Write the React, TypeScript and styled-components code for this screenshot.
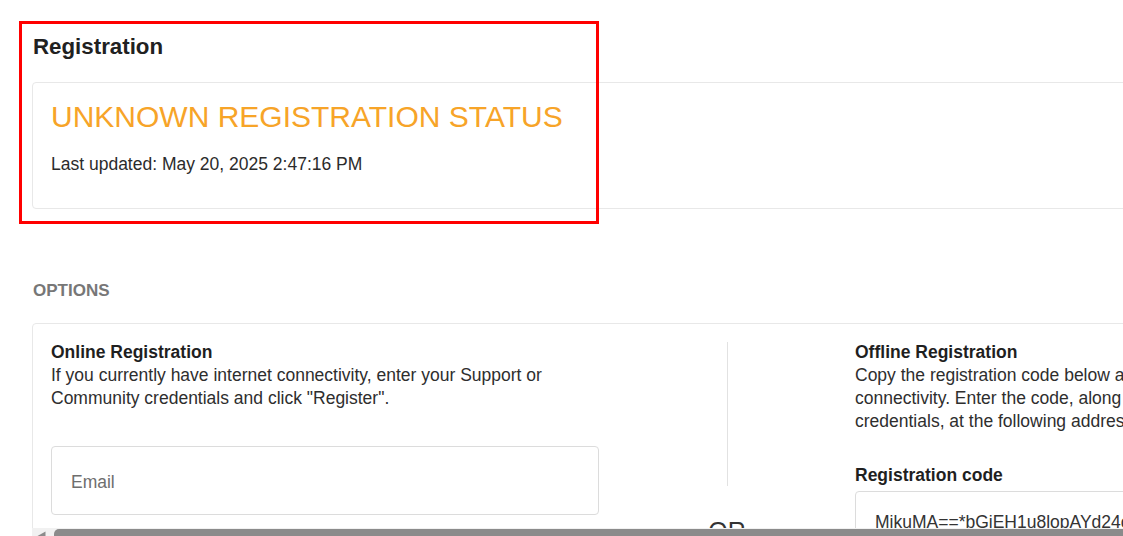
import React from "react";
import styled, { createGlobalStyle } from "styled-components";

const GlobalStyle = createGlobalStyle`
  html, body {
    margin: 0;
    padding: 0;
    background: #ffffff;
    overflow: hidden;
  }
  body {
    font-family: "Liberation Sans", Arial, Helvetica, sans-serif;
    color: #333333;
  }
  * { box-sizing: border-box; }
`;

const Viewport = styled.div`
  position: relative;
  width: 100%;
  height: 536px;
  overflow: hidden;
`;

const Page = styled.div`
  width: 1420px;
  padding: 34px 0 0 32px;
  display: flex;
  flex-direction: column;
`;

const Title = styled.h2`
  margin: 0 0 0 1px;
  font-size: 22.3px;
  line-height: 26px;
  font-weight: 700;
  color: #212121;
`;

const Card = styled.div<{ $top: number }>`
  margin-top: ${(p) => p.$top}px;
  border: 1px solid #e8e8e8;
  border-radius: 4px;
  background: #fff;
`;

const StatusCard = styled(Card)`
  padding: 16px 18px 32px;
`;

const StatusText = styled.div`
  font-size: 30px;
  line-height: 36px;
  color: #f7a428;
  font-weight: 400;
`;

const Updated = styled.div`
  margin-top: 18px;
  font-size: 17.5px;
  line-height: 23px;
  color: #2b2b2b;
`;

const SectionLabel = styled.div`
  margin: 72px 0 0 1px;
  font-size: 17px;
  line-height: 20px;
  font-weight: 700;
  color: #777777;
`;

const ScrollArea = styled.div`
  margin-top: 22px;
  height: 205px;
  overflow: hidden;
`;

const OptionsCard = styled(Card)`
  padding: 17px 18px;
  display: grid;
  grid-template-columns: 548px 256px 548px;
  height: 420px;
`;

const Column = styled.div`
  display: flex;
  flex-direction: column;
`;

const Heading = styled.div<{ $top?: number }>`
  margin-top: ${(p) => p.$top ?? 0}px;
  font-size: 17.5px;
  line-height: 23px;
  font-weight: 700;
  color: #1f1f1f;
`;

const Para = styled.p<{ $nowrap?: boolean }>`
  margin: 0;
  font-size: 17.5px;
  line-height: 23px;
  color: #2e2e2e;
  white-space: ${(p) => (p.$nowrap ? "nowrap" : "normal")};
`;

const Input = styled.input`
  margin-top: 36px;
  width: 548px;
  height: 69px;
  border: 1px solid #dcdcdc;
  border-radius: 4px;
  padding: 3px 19px 0;
  font-family: "Liberation Sans", Arial, sans-serif;
  font-size: 17.5px;
  color: #333;
  outline: none;
  &::placeholder {
    color: #6e6e6e;
  }
`;

const Middle = styled.div`
  display: flex;
  flex-direction: column;
  align-items: center;
`;

const Divider = styled.div`
  width: 1px;
  height: 144px;
  margin-top: 1px;
  background: #e2e2e2;
`;

const OrText = styled.div`
  margin-top: 30px;
  font-size: 25px;
  line-height: 30px;
  color: #333;
`;

const CodeBox = styled.div`
  position: relative;
  margin-top: 4px;
  border: 1px solid #dcdcdc;
  border-radius: 4px;
  padding: 19px 19px;
  font-size: 17.5px;
  line-height: 23px;
  color: #333;
  white-space: nowrap;
  overflow: hidden;
  height: 120px;
`;

const Notch = styled.span`
  position: absolute;
  top: -1px;
  left: 13px;
  width: 9px;
  height: 2px;
  background: #fff;
`;

const ScrollBar = styled.div`
  display: flex;
  height: 15px;
  background: #f1f1f1;
`;

const ArrowButton = styled.div`
  width: 22px;
  display: flex;
  align-items: center;
  justify-content: center;
  padding-right: 4px;
`;

const Thumb = styled.div`
  flex: 1;
  margin: 1px 0;
  border-radius: 5px;
  background: #8b8b8b;
`;

const Highlight = styled.div`
  position: absolute;
  left: 19px;
  top: 21px;
  width: 580px;
  height: 203px;
  border: 3px solid #ff0000;
  pointer-events: none;
`;

export default function App() {
  return (
    <>
      <GlobalStyle />
      <Viewport>
        <Page>
          <Title>Registration</Title>
          <StatusCard $top={22}>
            <StatusText>UNKNOWN REGISTRATION STATUS</StatusText>
            <Updated>Last updated: May 20, 2025 2:47:16 PM</Updated>
          </StatusCard>

          <SectionLabel>OPTIONS</SectionLabel>

          <ScrollArea>
            <OptionsCard $top={0}>
              <Column>
                <Heading>Online Registration</Heading>
                <Para>
                  If you currently have internet connectivity, enter your Support or
                  Community credentials and click "Register".
                </Para>
                <Input placeholder="Email" />
              </Column>
              <Middle>
                <Divider />
                <OrText>OR</OrText>
              </Middle>
              <Column>
                <Heading>Offline Registration</Heading>
                <Para $nowrap>
                  Copy the registration code below and use it on a device with internet
                  <br />
                  connectivity. Enter the code, along with your Support or Community
                  <br />
                  credentials, at the following address:
                </Para>
                <Heading $top={31}>Registration code</Heading>
                <CodeBox>
                  <Notch />
                  MikuMA==*bGiEH1u8lopAYd24cQxTz9wRk3vLmN0pQe7sYhGfB2aUjXo
                </CodeBox>
              </Column>
            </OptionsCard>
          </ScrollArea>
          <ScrollBar>
            <ArrowButton>
              <svg width="9" height="10" viewBox="0 0 9 10">
                <path d="M0.5 5 L8.5 0.5 L8.5 9.5 Z" fill="#8b8b8b" />
              </svg>
            </ArrowButton>
            <Thumb />
          </ScrollBar>
        </Page>
        <Highlight />
      </Viewport>
    </>
  );
}
